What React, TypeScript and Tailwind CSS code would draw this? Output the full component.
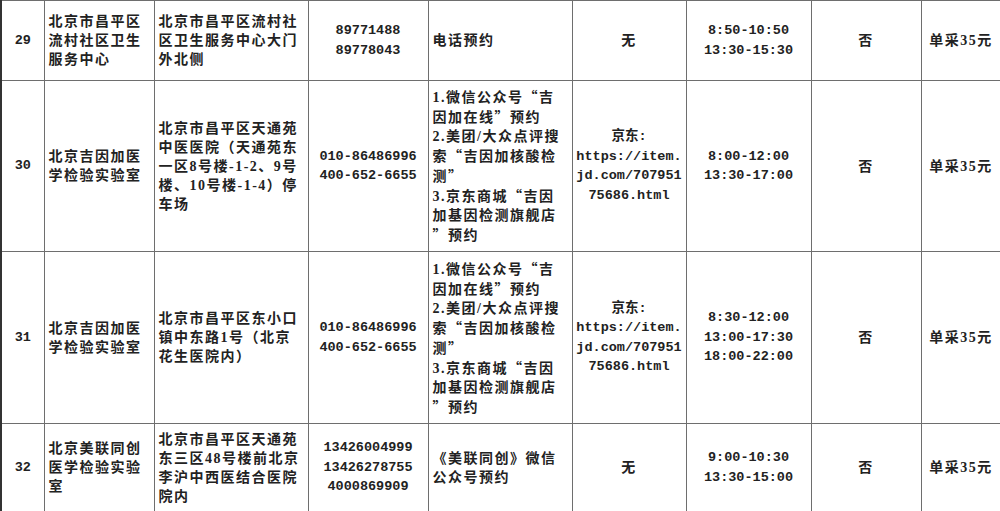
type Row = {
  no: string;
  name: string[];
  addr: string[];
  phone: string[];
  book: string[];
  online: string[];
  time: string[];
  home: string;
  price: string;
  h: string;
};

const rows: Row[] = [
  {
    no: '29',
    name: ['北京市昌平区', '流村社区卫生', '服务中心'],
    addr: ['北京市昌平区流村社', '区卫生服务中心大门', '外北侧'],
    phone: ['89771488', '89778043'],
    book: ['电话预约'],
    online: ['无'],
    time: ['8:50-10:50', '13:30-15:30'],
    home: '否',
    price: '单采35元',
    h: 'h-[80px]',
  },
  {
    no: '30',
    name: ['北京吉因加医', '学检验实验室'],
    addr: ['北京市昌平区天通苑', '中医医院（天通苑东', '一区8号楼-1-2、9号', '楼、10号楼-1-4）停', '车场'],
    phone: ['010-86486996', '400-652-6655'],
    book: [
      '1.微信公众号“吉',
      '因加在线”预约',
      '2.美团/大众点评搜',
      '索“吉因加核酸检',
      '测”',
      '3.京东商城“吉因',
      '加基因检测旗舰店',
      '”预约',
    ],
    online: ['京东:', 'https://item.', 'jd.com/707951', '75686.html'],
    time: ['8:00-12:00', '13:30-17:00'],
    home: '否',
    price: '单采35元',
    h: 'h-[171px]',
  },
  {
    no: '31',
    name: ['北京吉因加医', '学检验实验室'],
    addr: ['北京市昌平区东小口', '镇中东路1号（北京', '花生医院内）'],
    phone: ['010-86486996', '400-652-6655'],
    book: [
      '1.微信公众号“吉',
      '因加在线”预约',
      '2.美团/大众点评搜',
      '索“吉因加核酸检',
      '测”',
      '3.京东商城“吉因',
      '加基因检测旗舰店',
      '”预约',
    ],
    online: ['京东:', 'https://item.', 'jd.com/707951', '75686.html'],
    time: ['8:30-12:00', '13:00-17:30', '18:00-22:00'],
    home: '否',
    price: '单采35元',
    h: 'h-[172px]',
  },
  {
    no: '32',
    name: ['北京美联同创', '医学检验实验', '室'],
    addr: ['北京市昌平区天通苑', '东三区48号楼前北京', '李沪中西医结合医院', '院内'],
    phone: ['13426004999', '13426278755', '4000869909'],
    book: ['《美联同创》微信', '公众号预约'],
    online: ['无'],
    time: ['9:00-10:30', '13:30-15:00'],
    home: '否',
    price: '单采35元',
    h: 'h-[88px]',
  },
];

// quotes need the CJK font so they take a full cell like in the original
function Text({ line }: { line: string }) {
  const parts = line.split(/([“”])/);
  return (
    <>
      {parts.map((p, i) =>
        p === '“' || p === '”' ? (
          <span key={i} className="font-['Noto_Sans_CJK_SC',sans-serif]">
            {p}
          </span>
        ) : (
          <span key={i}>{p}</span>
        ),
      )}
    </>
  );
}

function Lines({ lines }: { lines: string[] }) {
  return (
    <>
      {lines.map((l, i) => (
        <div key={i}>
          <Text line={l} />
        </div>
      ))}
    </>
  );
}

const cjk = "font-['Liberation_Serif','Noto_Sans_CJK_SC',serif] font-bold text-[14px] tracking-[1.5px] leading-[19px]";
const mono = "font-['Liberation_Mono','Noto_Sans_CJK_SC',monospace] font-bold text-[13.5px] leading-[19.5px]";
const cell = 'border border-[#6e6e6e] align-middle p-0';

export default function App() {
  return (
    <div className="w-[1000px] h-[511px] bg-white overflow-hidden text-[#222]">
      <table className="table-fixed border-collapse w-[1000px] border-l-2 border-l-[#333]">
        <colgroup>
          <col className="w-[43px]" />
          <col className="w-[110px]" />
          <col className="w-[154px]" />
          <col className="w-[120px]" />
          <col className="w-[144px]" />
          <col className="w-[114px]" />
          <col className="w-[125px]" />
          <col className="w-[110px]" />
          <col className="w-[80px]" />
        </colgroup>
        <tbody>
          {rows.map((r) => (
            <tr key={r.no} className={r.h}>
              <td className={`${cell} ${mono} text-center`}>{r.no}</td>
              <td className={`${cell} ${cjk} pl-[4px]`}>
                <Lines lines={r.name} />
              </td>
              <td className={`${cell} ${cjk} pl-[4px]`}>
                <Lines lines={r.addr} />
              </td>
              <td className={`${cell} ${mono} text-center`}>
                <Lines lines={r.phone} />
              </td>
              <td className={`${cell} ${cjk} pl-[4px] leading-[19.7px]`}>
                <Lines lines={r.book} />
              </td>
              <td className={`${cell} ${r.online.length > 1 ? mono : cjk} text-center`}>
                <Lines lines={r.online} />
              </td>
              <td className={`${cell} ${mono} text-center`}>
                <Lines lines={r.time} />
              </td>
              <td className={`${cell} ${cjk} text-center`}>{r.home}</td>
              <td className={`${cell} ${cjk} text-center tracking-[0.5px]`}>{r.price}</td>
            </tr>
          ))}
        </tbody>
      </table>
    </div>
  );
}
